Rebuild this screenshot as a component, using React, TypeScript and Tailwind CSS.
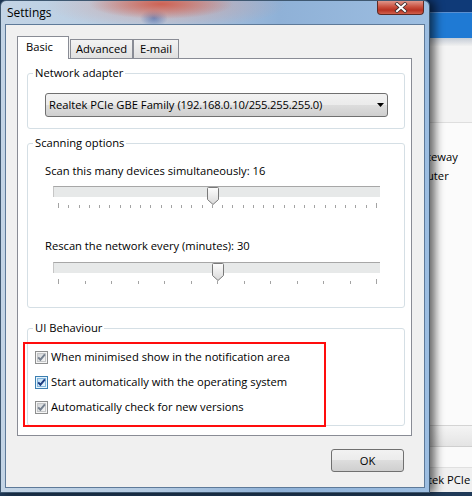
import React from "react";

function Check({ variant }: { variant: "grey" | "blue" }) {
  const blue = variant === "blue";
  const id = `cbg-${variant}`;
  return (
    <svg width="13" height="13" viewBox="0 0 13 13" className="shrink-0">
      <defs>
        <linearGradient id={id} x1="0" y1="0" x2="1" y2="1">
          <stop offset="0" stopColor={blue ? "#b9dbf4" : "#d0d3d6"} />
          <stop offset="1" stopColor={blue ? "#eef7fd" : "#f7f7f7"} />
        </linearGradient>
      </defs>
      <rect x="0.5" y="0.5" width="12" height="12" fill={blue ? "#e8f4fc" : "#f5f5f5"} stroke={blue ? "#3c7fb1" : "#8e8f8f"} />
      <rect x="2.5" y="2.5" width="8" height="8" fill={`url(#${id})`} stroke={blue ? "#82b6dd" : "#c4c6c8"} />
      <path d="M3.2 6.3 L5.4 8.7 L9.9 3.3" fill="none" stroke={blue ? "#1b3b80" : "#75808f"} strokeWidth="1.9" />
    </svg>
  );
}

function Slider({ ticks, index }: { ticks: number; index: number }) {
  const first = 5;
  const last = 323;
  const pos = first + (index * (last - first)) / (ticks - 1);
  return (
    <div className="relative ml-[25px] w-[327px] h-[26px]">
      <div className="mt-[3px] h-[11px] border-t border-t-[#a7a7a7] border-l border-l-[#c6c6c6] bg-[#e7e9e9]" />
      <div className="mt-[6px] h-[5px] flex justify-between items-end pl-[5px] pr-[3px]">
        {Array.from({ length: ticks }).map((_, i) => (
          <div
            key={i}
            className={
              i === 0 || i === ticks - 1
                ? "w-px h-[5px] bg-[#a3a3a3]"
                : "w-px h-[3px] bg-[#a3a3a3]"
            }
          />
        ))}
      </div>
      <svg
        className="absolute top-[1px]"
        style={{ left: Math.round(pos) - 5 }}
        width="12"
        height="18"
        viewBox="0 0 12 18"
      >
        <defs>
          <linearGradient id="thumbg" x1="0" y1="0" x2="0" y2="1">
            <stop offset="0" stopColor="#fdfdfd" />
            <stop offset="1" stopColor="#d9d9d9" />
          </linearGradient>
        </defs>
        <path
          d="M1.5 0.5 H10.5 Q11.5 0.5 11.5 1.5 V12.5 L6 17.5 L0.5 12.5 V1.5 Q0.5 0.5 1.5 0.5 Z"
          fill="url(#thumbg)"
          stroke="#7a7a7a"
        />
      </svg>
    </div>
  );
}

function Group({ title, children, className }: { title: string; children: React.ReactNode; className?: string }) {
  return (
    <fieldset className={`border border-[#d5dfe5] rounded-[3px] ${className ?? ""}`}>
      <legend className="ml-[5px] px-[2px] leading-[16px] text-black">{title}</legend>
      {children}
    </fieldset>
  );
}

export default function App() {
  return (
    <div className="relative w-[472px] h-[496px] overflow-hidden bg-[#203a58] font-['Open_Sans','Noto_Sans',sans-serif] text-[11.2px] text-black">
      {/* background window on the right */}
      <div className="absolute left-[425px] top-0 w-[47px] h-[492px] flex flex-col bg-[#fbfbfb] overflow-hidden whitespace-nowrap">
        <div className="h-[12px] bg-[#0f3a78]" />
        <div className="h-px bg-[#5a8fd0]" />
        <div className="h-[25px] bg-[#1f7ad4]" />
        <div className="h-[8px] bg-[linear-gradient(to_bottom,#c4ccd6,#f1f1f1)]" />
        <div className="h-[77px] bg-[#f4f4f4] border-b border-[#dedede]" />
        <div className="pl-[2px] mt-[26px] leading-[16px]">teway</div>
        <div className="pl-[2px] mt-[3px] leading-[16px]">uter</div>
        <div className="flex-1" />
        <div className="h-px bg-[#d4d4d4]" />
        <div className="h-[21px] bg-[linear-gradient(to_bottom,#f4f4f4,#e4e4e4)] border-b border-[#cfcfcf]" />
        <div className="h-[21px] bg-[#fafafa] border-b border-[#e0e0e0]" />
        <div className="h-[24px] bg-[#f0f0f0] flex items-center pl-[3px] leading-[16px]">tek PCIe</div>
      </div>

      {/* dialog */}
      <div className="absolute left-0 top-0 w-[430px] h-[493px] flex flex-col rounded-t-[6px] border border-[#3f5871] shadow-[5px_0_10px_rgba(0,0,0,0.6)] bg-[radial-gradient(ellipse_72px_15px_at_160px_3px,rgba(205,95,80,0.95),rgba(205,95,80,0)),radial-gradient(ellipse_120px_24px_at_165px_4px,rgba(222,150,135,0.6),rgba(222,150,135,0)),radial-gradient(ellipse_14px_9px_at_153px_17px,rgba(60,115,190,0.85),rgba(60,115,190,0)),linear-gradient(to_right,#c3d4e5,#b5cbe2_35%,#8fb1d7_65%,#9dbee1)]">
        <div className="h-[23px] flex items-start justify-between">
          <span className="self-center pl-[6px] text-[12px] leading-[16px] text-black">Settings</span>
          <div className="mr-[5px] w-[47px] h-[14px] rounded-b-[4px] border border-t-0 border-[#5d2a24] bg-[linear-gradient(to_bottom,#e0968a,#c9503f_45%,#b83222_70%,#d0604c)] flex items-center justify-center">
            <svg width="14" height="11" viewBox="0 0 14 11">
              <path d="M3 2 L11 9 M11 2 L3 9" stroke="#3b2a2a" strokeWidth="3.6" strokeLinecap="square" />
              <path d="M3 2 L11 9 M11 2 L3 9" stroke="#ffffff" strokeWidth="2" strokeLinecap="square" />
            </svg>
          </div>
        </div>

        <div className="mx-[4px] mb-[4px] flex-1 border border-[#5e7a99] bg-[#f0f0f0] flex flex-col pt-[11px] pl-[11px] pr-[12px] pb-[15px]">
          {/* tabs */}
          <div className="h-[22px] flex items-end">
            <div className="relative z-10 -mb-px h-[23px] w-[52px] border border-b-0 border-[#898c95] bg-white pl-[8px] pt-[2px] leading-[16px]">
              Basic
            </div>
            <div className="ml-px h-[19px] w-[63px] border border-b-0 border-[#898c95] bg-[linear-gradient(to_bottom,#f3f3f3,#e0e0e0)] flex items-center justify-center leading-[16px]">
              Advanced
            </div>
            <div className="h-[19px] w-[46px] border border-b-0 border-[#898c95] bg-[linear-gradient(to_bottom,#f3f3f3,#e0e0e0)] flex items-center justify-center leading-[16px]">
              E-mail
            </div>
          </div>

          {/* panel */}
          <div className="relative h-[378px] border border-[#898c95] bg-white pt-[6px] pl-[9px] pr-[6px] pb-[9px] flex flex-col">
            <Group title="Network adapter" className="pb-[11px]">
              <div className="mt-[12px] ml-[17px] w-[343px] h-[24px] rounded-[3px] border border-[#707070] bg-[linear-gradient(to_bottom,#f2f2f2_0%,#ebebeb_50%,#dddddd_50%,#cfcfcf_100%)] flex items-center pl-[3px] pr-[3px] leading-[16px]">
                <span className="flex-1 whitespace-nowrap">
                  Realtek PCIe GBE Family <span className="tracking-[-0.18px]">(192.168.0.10/255.255.255.0)</span>
                </span>
                <svg width="7" height="4" viewBox="0 0 7 4" className="shrink-0">
                  <path d="M0 0 H7 L3.5 4 Z" fill="#000" />
                </svg>
              </div>
            </Group>

            <Group title="Scanning options" className="mt-[6px] pb-[19px]">
              <div className="mt-[12px] ml-[17px] leading-[16px]">Scan this many devices simultaneously: 16</div>
              <div className="mt-[7px]">
                <Slider ticks={32} index={15} />
              </div>
              <div className="mt-[26px] ml-[17px] leading-[16px]">Rescan the network every (minutes): 30</div>
              <div className="mt-[8px]">
                <Slider ticks={13} index={6} />
              </div>
            </Group>

            <Group title="UI Behaviour" className="mt-[12px] pb-[10px]">
              <div className="mt-[13px] pl-[7px] flex flex-col gap-[9px]">
                <div className="h-[16px] flex items-center">
                  <Check variant="grey" />
                  <span className="ml-[3px] leading-[16px]">When minimised show in the notification area</span>
                </div>
                <div className="h-[16px] flex items-center">
                  <Check variant="blue" />
                  <span className="ml-[3px] leading-[16px]">Start automatically with the operating system</span>
                </div>
                <div className="h-[16px] flex items-center">
                  <Check variant="grey" />
                  <span className="ml-[3px] leading-[16px]">Automatically check for new versions</span>
                </div>
              </div>
            </Group>

            {/* red annotation */}
            <div className="absolute left-[5px] top-[283px] w-[303px] h-[85px] border-2 border-[#ff0d0d] pointer-events-none" />
          </div>

          <div className="mt-[13px] flex justify-end pr-[8px]">
            <div className="w-[73px] h-[23px] rounded-[3px] border border-[#707070] bg-[linear-gradient(to_bottom,#f2f2f2_0%,#ebebeb_50%,#dddddd_50%,#cfcfcf_100%)] flex items-center justify-center leading-[16px]">
              OK
            </div>
          </div>
        </div>
      </div>
    </div>
  );
}
